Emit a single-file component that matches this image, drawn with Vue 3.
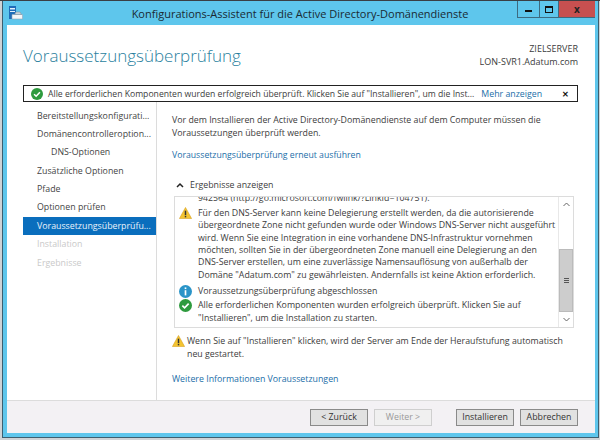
<script setup>
const steps = [
  { label: 'Bereitstellungskonfigurati...' },
  { label: 'Domänencontrolleroption...' },
  { label: 'DNS-Optionen', sub: true },
  { label: 'Zusätzliche Optionen' },
  { label: 'Pfade' },
  { label: 'Optionen prüfen' },
  { label: 'Voraussetzungsüberprüfu...', active: true },
  { label: 'Installation', disabled: true },
  { label: 'Ergebnisse', disabled: true }
]
</script>

<template>
  <div class="desktop">
    <div class="window">
      <header class="titlebar">
        <svg class="appicon" width="14" height="14" viewBox="0 0 14 14">
          <rect x="0" y="0" width="7" height="13" fill="#1f6cb8" />
          <rect x="1" y="2" width="5" height="1.5" fill="#e4f0fa" />
          <rect x="1" y="5" width="5" height="1" fill="#e4f0fa" />
          <path d="M3 8.5h10.5V13H3z" fill="#f2f5f8" stroke="#8fa6b8" stroke-width=".6" />
          <path d="M5.5 8.5L7 6h4l1.500 2.500z" fill="#c9d3dc" stroke="#7f93a4" stroke-width=".6" />
        </svg>
        <div class="wintitle">Konfigurations-Assistent für die Active Directory-Domänendienste</div>
        <div class="wincontrols">
          <span class="wc minbox"><i class="min"></i></span>
          <span class="wc maxbox"><i class="max"></i></span>
          <span class="wc close">x</span>
        </div>
      </header>

      <div class="client">
        <div class="head">
          <h1>Voraussetzungsüberprüfung</h1>
          <div class="server">
            <div>ZIELSERVER</div>
            <div>LON-SVR1.Adatum.com</div>
          </div>
        </div>

        <div class="banner">
          <svg class="ico" width="12" height="12" viewBox="0 0 14 14">
            <circle cx="7" cy="7" r="7" fill="#2e9a3e" />
            <path d="M3.600 7.200l2.400 2.400 4.400-4.600" fill="none" stroke="#fff" stroke-width="1.800" />
          </svg>
          <span class="bannertext">Alle erforderlichen Komponenten wurden erfolgreich überprüft. Klicken Sie auf "Installieren", um die Inst...</span>
          <a class="link more">Mehr anzeigen</a>
          <span class="bannerclose">✕</span>
        </div>

        <div class="main">
          <nav class="nav">
            <div
              v-for="s in steps"
              :key="s.label"
              class="step"
              :class="{ sub: s.sub, active: s.active, disabled: s.disabled }"
            >{{ s.label }}</div>
          </nav>

          <section class="content">
            <p class="intro">Vor dem Installieren der Active Directory-Domänendienste auf dem Computer müssen die Voraussetzungen überprüft werden.</p>
            <a class="link rerun">Voraussetzungsüberprüfung erneut ausführen</a>

            <div class="reshead">
              <svg width="8" height="6" viewBox="0 0 8 6"><path d="M1 5l3-3 3 3" fill="none" stroke="#222" stroke-width="1.500" /></svg>
              <span>Ergebnisse anzeigen</span>
            </div>

            <div class="results">
              <div class="reslist">
                <div class="clipline">942564 (http://go.microsoft.com/fwlink/?LinkId=104751).</div>
                <div class="msg warning">
                  <svg class="ico" width="13" height="12" viewBox="0 0 14 13">
                    <path d="M7 .5L13.600 12.500H.4z" fill="#f4c430" stroke="#d39a1a" stroke-width=".6" />
                    <rect x="6.200" y="4" width="1.600" height="4.800" fill="#333" />
                    <rect x="6.200" y="9.600" width="1.600" height="1.600" fill="#333" />
                  </svg>
                  <div>Für den DNS-Server kann keine Delegierung erstellt werden, da die autorisierende<br>übergeordnete Zone nicht gefunden wurde oder Windows DNS-Server nicht ausgeführt<br>wird. Wenn Sie eine Integration in eine vorhandene DNS-Infrastruktur vornehmen<br>möchten, sollten Sie in der übergeordneten Zone manuell eine Delegierung an den<br>DNS-Server erstellen, um eine zuverlässige Namensauflösung von außerhalb der<br>Domäne "Adatum.com" zu gewährleisten. Andernfalls ist keine Aktion erforderlich.</div>
                </div>
                <div class="msg info">
                  <svg class="ico" width="13" height="13" viewBox="0 0 14 14">
                    <circle cx="7" cy="7" r="7" fill="#2a94c8" />
                    <rect x="6.100" y="2.600" width="1.800" height="1.800" fill="#fff" />
                    <rect x="6.100" y="5.600" width="1.800" height="5.600" fill="#fff" />
                  </svg>
                  <div>Voraussetzungsüberprüfung abgeschlossen</div>
                </div>
                <div class="msg">
                  <svg class="ico" width="13" height="13" viewBox="0 0 14 14">
                    <circle cx="7" cy="7" r="7" fill="#2e9a3e" />
                    <path d="M3.600 7.200l2.400 2.400 4.400-4.600" fill="none" stroke="#fff" stroke-width="1.800" />
                  </svg>
                  <div>Alle erforderlichen Komponenten wurden erfolgreich überprüft. Klicken Sie auf<br>"Installieren", um die Installation zu starten.</div>
                </div>
              </div>
              <div class="scrollbar">
                <svg class="arrow" width="7" height="5" viewBox="0 0 7 5"><path d="M.5 4l3-3 3 3" fill="none" stroke="#666" /></svg>
                <div class="track">
                  <div class="thumb"><i></i><i></i><i></i></div>
                </div>
                <svg class="arrow" width="7" height="5" viewBox="0 0 7 5"><path d="M.5 1l3 3 3-3" fill="none" stroke="#666" /></svg>
              </div>
            </div>

            <div class="warn">
              <svg class="ico" width="13" height="12" viewBox="0 0 14 13">
                <path d="M7 .5L13.600 12.500H.4z" fill="#f4c430" stroke="#d39a1a" stroke-width=".6" />
                <rect x="6.200" y="4" width="1.600" height="4.800" fill="#333" />
                <rect x="6.200" y="9.600" width="1.600" height="1.600" fill="#333" />
              </svg>
              <div>Wenn Sie auf "Installieren" klicken, wird der Server am Ende der Heraufstufung automatisch<br>neu gestartet.</div>
            </div>

            <a class="link moreinfo">Weitere Informationen Voraussetzungen</a>
          </section>
        </div>

        <footer class="footer">
          <button class="btn">&lt; Zurück</button>
          <button class="btn off">Weiter &gt;</button>
          <button class="btn install">Installieren</button>
          <button class="btn">Abbrechen</button>
        </footer>
      </div>
    </div>
  </div>
</template>

<style scoped>
.desktop {
  width: 600px;
  height: 440px;
  overflow: hidden;
  box-sizing: border-box;
  padding: 0 1px 2px 2px;
  border-top: 1px solid #3a3f44;
  background: #cfd3d6;
  font-family: "Open Sans", "Noto Sans", sans-serif;
  font-size: 8.8px;
  color: #3c3c3c;
}
.window {
  height: 100%;
  box-sizing: border-box;
  display: flex;
  flex-direction: column;
  background: #5ec6ec;
  padding: 0 3px 4px 4px;
  border: 1px solid #3d5f70;
  border-top: 0;
}
.titlebar {
  height: 24px;
  flex: none;
  display: flex;
  align-items: center;
}
.appicon { margin-left: 2px; flex: none; }
.wintitle {
  flex: 1;
  text-align: center;
  font-size: 11px;
  color: #1a2a33;
  padding-left: 60px;
  white-space: nowrap;
}
.wincontrols {
  display: flex;
  align-self: flex-start;
  height: 17px;
  border-left: 1px solid #3d6a80;
  border-bottom: 1px solid #3d6a80;
  box-sizing: border-box;
}
.wc {
  display: flex;
  align-items: center;
  justify-content: center;
  border-right: 1px solid #3d6a80;
  box-sizing: border-box;
}
.minbox { width: 22px; }
.maxbox { width: 19px; }
.wc .min { width: 7px; height: 2px; background: #111; margin-top: 3px; }
.wc .max { width: 8px; height: 7px; border: 1.500px solid #111; border-top-width: 2px; box-sizing: border-box; }
.wc.close { width: 36px; background: #c75050; color: #222; font-weight: 700; font-size: 10px; border: 0; }
.client {
  flex: 1;
  min-height: 0;
  background: #fff;
  display: flex;
  flex-direction: column;
}
.head {
  height: 60px;
  flex: none;
  display: flex;
  justify-content: space-between;
  padding: 19px 17px 0 16px;
  box-sizing: border-box;
}
h1 {
  margin: 0;
  font-family: "Open Sans", sans-serif;
  font-weight: 300;
  font-size: 17px;
  line-height: 24px;
  color: #2a7f9e;
}
.server { text-align: right; line-height: 13px; margin-top: -2px; font-size: 9px; }
.banner {
  height: 17px;
  flex: none;
  box-sizing: border-box;
  margin: 0 17px 0 16px;
  border: 1px solid #222;
  display: flex;
  align-items: center;
  padding-left: 7px;
}
.bannertext { margin-left: 5px; white-space: nowrap; flex: none; font-size: 8.650px; }
.more { margin-left: 7px; white-space: nowrap; }
.bannerclose { margin-left: auto; width: 24px; text-align: center; font-size: 8px; font-weight: 700; color: #111; }
.main { flex: 1; min-height: 0; display: flex; }
.nav {
  width: 150px;
  flex: none;
  box-sizing: border-box;
  padding: 4.500px 0 0 16px;
  border-right: 1px solid #dcdcdc;
}
.step { height: 18.400px; line-height: 18.400px; padding-left: 14px; white-space: nowrap; color: #444; width: 133px; box-sizing: border-box; }
.step.sub { padding-left: 28px; }
.step.active { background: #0a6ebd; color: #e9f3fb; }
.step.disabled { color: #c9c9c9; }
.content { flex: 1; min-width: 0; padding: 12px 0 0 15px; }
.intro { margin: 0; line-height: 13.400px; width: 400px; }
.link { color: #1b6ea8; }
.rerun { display: block; margin-top: 7px; line-height: 14px; font-size: 8.700px; }
.reshead { margin-top: 16px; display: flex; align-items: center; gap: 6px; padding-left: 4px; line-height: 14px; }
.results {
  margin: 4px 0 0 2px;
  width: 400px;
  height: 132px;
  box-sizing: border-box;
  border: 1px solid #dcdcdc;
  display: flex;
  overflow: hidden;
}
.reslist { flex: 1; min-width: 0; padding: 0 0 0 4px; line-height: 12.400px; overflow: hidden; }
.clipline { margin-top: -5px; padding-left: 19px; height: 12px; margin-bottom: 3px; white-space: nowrap; }
.msg { display: flex; gap: 6px; white-space: nowrap; }
.msg.warning { margin-bottom: 3.500px; }
.msg.info { margin-bottom: 1.500px; }
.msg .ico { flex: none; }
.scrollbar {
  width: 15px;
  flex: none;
  display: flex;
  flex-direction: column;
  align-items: center;
  border-left: 1px solid #e8e8e8;
  box-sizing: border-box;
}
.arrow { flex: none; margin: 5px 0; }
.track { flex: 1; width: 100%; display: flex; flex-direction: column; justify-content: flex-end; }
.thumb {
  height: 63px;
  background: #cdcdcd;
  border: 1px solid #bbb;
  box-sizing: border-box;
  display: flex;
  flex-direction: column;
  align-items: center;
  justify-content: center;
  gap: 1px;
}
.thumb i { width: 5px; height: 1px; background: #555; }
.warn { display: flex; gap: 2px; margin-top: 7px; line-height: 13px; white-space: nowrap; }
.warn .ico { flex: none; }
.moreinfo { display: block; margin-top: 11px; line-height: 14px; }
.footer {
  height: 33px;
  flex: none;
  box-sizing: border-box;
  border-top: 1px solid #dcdcdc;
  background: #f3f1f4;
  display: flex;
  align-items: center;
  justify-content: flex-end;
  padding: 0 17px 0 0;
}
.btn {
  width: 58px;
  height: 17px;
  padding: 0;
  box-sizing: border-box;
  border: 1px solid #8a8a8a;
  background: #e1e1e1;
  color: #333;
  font: inherit;
  margin-left: 6px;
}
.btn.off { background: #f0f0f0; border-color: #cfcfcf; color: #999; }
.btn.install { margin-left: 24px; }
</style>
